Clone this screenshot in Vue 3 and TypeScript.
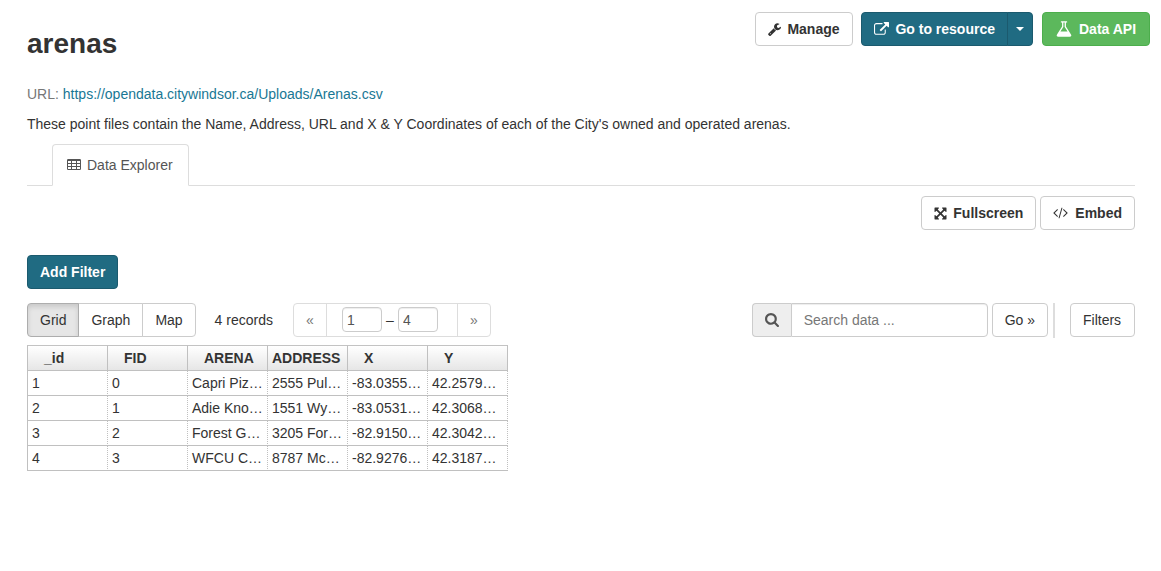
<script setup lang="ts">
import { ref } from 'vue'

interface Column {
  key: string
  wide?: boolean
}

const columns: Column[] = [
  { key: '_id' },
  { key: 'FID' },
  { key: 'ARENA' },
  { key: 'ADDRESS', wide: true },
  { key: 'X' },
  { key: 'Y' },
]

const rows: string[][] = [
  ['1', '0', 'Capri Piz…', '2555 Pul…', '-83.0355…', '42.2579…'],
  ['2', '1', 'Adie Kno…', '1551 Wy…', '-83.0531…', '42.3068…'],
  ['3', '2', 'Forest G…', '3205 For…', '-82.9150…', '42.3042…'],
  ['4', '3', 'WFCU C…', '8787 Mc…', '-82.9276…', '42.3187…'],
]

const views = ['Grid', 'Graph', 'Map']
const activeView = ref('Grid')
const from = ref('1')
const to = ref('4')
const query = ref('')
</script>

<template>
  <main class="page">
    <header class="header">
      <h1>arenas</h1>
      <div class="actions">
        <a class="btn strong manage" href="#">
          <svg class="icon w13" viewBox="64 96 1664 1664" aria-hidden="true"><path d="M448 1472q0-26-19-45t-45-19-45 19-19 45 19 45 45 19 45-19 19-45zm644-420l-682 682q-37 37-90 37-52 0-91-37l-106-108q-38-36-38-90 0-53 38-91l681-681q39 98 114.5 173.5t173.5 114.5zm634-435q0 39-23 106-47 134-164.5 217.5t-258.5 83.5q-185 0-316.5-131.5t-131.5-316.5 131.5-316.5 316.5-131.5q58 0 121.5 16.5t107.5 46.5q16 11 16 28t-16 28l-293 169v224l193 107q5-3 79-48.5t135.5-81 70.5-35.5q15 0 23.5 10t8.5 25z" /></svg>
          Manage
        </a>
        <div class="group">
          <a class="btn strong primary" href="#">
            <svg class="icon w15" viewBox="0 0 1792 1792" aria-hidden="true"><path d="M1408 928v320q0 119-84.5 203.5t-203.5 84.5h-832q-119 0-203.5-84.5t-84.5-203.5v-832q0-119 84.5-203.5t203.5-84.5h704q14 0 23 9t9 23v64q0 14-9 23t-23 9h-704q-66 0-113 47t-47 113v832q0 66 47 113t113 47h832q66 0 113-47t47-113v-320q0-14 9-23t23-9h64q14 0 23 9t9 23zm384-864v512q0 26-19 45t-45 19-45-19l-176-176-652 652q-10 10-23 10t-23-10l-114-114q-10-10-10-23t10-23l652-652-176-176q-19-19-19-45t19-45 45-19h512q26 0 45 19t19 45z" /></svg>
            Go to resource
          </a>
          <button class="btn primary toggle" type="button" aria-label="More resource options"><span class="caret"></span></button>
        </div>
        <button class="btn strong success" type="button">
          <svg class="icon w18" viewBox="0 0 1792 1792" aria-hidden="true"><path d="M1591 1448q56 89 21.5 152.5t-140.5 63.5h-1152q-106 0-140.5-63.5t21.5-152.5l503-793v-399h-64q-26 0-45-19t-19-45 19-45 45-19h512q26 0 45 19t19 45-19 45-45 19h-64v399zm-779-725l-272 429h712l-272-429-20-31v-436h-128v436z" /></svg>
          Data API
        </button>
      </div>
    </header>

    <p class="url">URL: <a href="https://opendata.citywindsor.ca/Uploads/Arenas.csv">https://opendata.citywindsor.ca/Uploads/Arenas.csv</a></p>
    <p>These point files contain the Name, Address, URL and X &amp; Y Coordinates of each of the City's owned and operated arenas.</p>

    <nav class="tabs">
      <a class="tab" href="#">
        <svg class="icon w14" viewBox="0 0 14 14" aria-hidden="true"><path fill-rule="evenodd" d="M1.2 1h11.6q1.2 0 1.2 1.2v8.6q0 1.2-1.2 1.2H1.2Q0 12 0 10.8V2.2Q0 1 1.2 1zM1 3v2h3V3zM5 3v2h4V3zM10 3v2h3V3zM1 6v2h3V6zM5 6v2h4V6zM10 6v2h3V6zM1 9v2h3V9zM5 9v2h4V9zM10 9v2h3V9z" /></svg>
        Data Explorer
      </a>
    </nav>

    <div class="view-actions">
      <a class="btn strong" href="#">
        <svg class="icon w13" viewBox="64 64 1664 1664" aria-hidden="true"><path d="M1411 541l-355 355 355 355 144-144q29-31 70-14 39 17 39 59v448q0 26-19 45t-45 19h-448q-42 0-59-40-17-39 14-69l144-144-355-355-355 355 144 144q31 30 14 69-17 40-59 40h-448q-26 0-45-19t-19-45v-448q0-42 40-59 39-17 69 14l144 144 355-355-355-355-144 144q-19 19-45 19-12 0-24-5-40-17-40-59v-448q0-26 19-45t45-19h448q42 0 59 40 17 39-14 69l-144 144 355 355 355-355-144-144q-31-30-14-69 17-40 59-40h448q26 0 45 19t19 45v448q0 42-39 59-13 5-25 5-26 0-45-19z" /></svg>
        Fullscreen
      </a>
      <button class="btn strong" type="button">
        <svg class="icon w16" viewBox="64 64 2048 1792" aria-hidden="true"><path d="M681 1399l-50 50q-10 10-23 10t-23-10l-466-466q-10-10-10-23t10-23l466-466q10-10 23-10t23 10l50 50q10 10 10 23t-10 23l-393 393 393 393q10 10 10 23t-10 23zm591-1067l-373 1291q-4 13-15.5 19.5t-23.5 2.5l-62-17q-13-4-19.5-15.5t-2.5-24.5l373-1291q4-13 15.5-19.5t23.5-2.5l62 17q13 4 19.5 15.5t2.5 24.5zm657 651l-466 466q-10 10-23 10t-23-10l-50-50q-10-10-10-23t10-23l393-393-393-393q-10-10-10-23t10-23l50-50q10-10 23-10t23 10l466 466q10 10 10 23t-10 23z" /></svg>
        Embed
      </button>
    </div>

    <button class="btn strong primary add-filter" type="button">Add Filter</button>

    <div class="toolbar">
      <div class="group">
        <button
          v-for="view in views"
          :key="view"
          class="btn"
          :class="{ active: view === activeView }"
          type="button"
          @click="activeView = view"
        >{{ view }}</button>
      </div>
      <span class="count">4 records</span>
      <div class="pager">
        <a class="step" href="#" aria-label="Previous page">«</a>
        <div class="range">
          <input v-model="from" type="text" aria-label="First record">
          <span>–</span>
          <input v-model="to" type="text" aria-label="Last record">
        </div>
        <a class="step" href="#" aria-label="Next page">»</a>
      </div>

      <form class="search" @submit.prevent>
        <div class="search-box">
          <label for="search-data" aria-label="Search data">
            <svg class="icon w14" viewBox="64 128 1664 1664" aria-hidden="true"><path d="M1216 832q0-185-131.5-316.5t-316.5-131.5-316.5 131.5-131.5 316.5 131.5 316.5 316.5 131.5 316.5-131.5 131.5-316.5zm512 832q0 52-38 90t-90 38q-54 0-90-38l-343-342q-179 124-399 124-143 0-273.5-55.5t-225-150-150-225-55.5-273.5 55.5-273.5 150-225 225-150 273.5-55.5 273.5 55.5 225 150 150 225 55.5 273.5q0 220-124 399l343 343q37 37 37 90z" /></svg>
          </label>
          <input id="search-data" v-model="query" type="text" placeholder="Search data ...">
        </div>
        <button class="btn" type="submit">Go »</button>
      </form>
      <div class="filters">
        <button class="btn" type="button">Filters</button>
      </div>
    </div>

    <table class="grid">
      <thead>
        <tr>
          <th v-for="column in columns" :key="column.key" scope="col" :class="{ wide: column.wide }">{{ column.key }}</th>
        </tr>
      </thead>
      <tbody>
        <tr v-for="row in rows" :key="row[0]">
          <td v-for="(cell, index) in row" :key="index">{{ cell }}</td>
        </tr>
      </tbody>
    </table>
  </main>
</template>

<style>
body {
  background: #fff;
}
</style>

<style scoped>
.page {
  padding: 12px 26px 24px 27px;
  color: #333;
  font: 14px/20px "Liberation Sans", Arial, sans-serif;
}

.page *,
.page *::before {
  box-sizing: border-box;
}

.header {
  display: flex;
  justify-content: space-between;
  align-items: flex-start;
  margin-right: -15px;
}

h1 {
  margin: 14px 0 22px;
  font-size: 28px;
  line-height: 36px;
}

.actions {
  display: flex;
  gap: 8px;
}

.actions .success {
  min-width: 108px;
  margin-left: 1px;
}

.manage {
  min-width: 98px;
}

p {
  margin: 0 0 10px;
}

.url {
  color: #777;
}

a {
  color: #187794;
  text-decoration: none;
}

input {
  color: #555;
  font: inherit;
  outline: none;
}

.btn {
  display: inline-flex;
  align-items: center;
  gap: 6px;
  height: 34px;
  margin: 0;
  padding: 0 12px;
  border: 1px solid #ccc;
  border-radius: 4px;
  background: #fff;
  color: #333;
  font: inherit;
  white-space: nowrap;
  cursor: pointer;
}

.btn.strong {
  font-weight: bold;
}

.btn.primary {
  border-color: #1b5a6e;
  background: #206b82;
  color: #fff;
}

.btn.success {
  border-color: #4cae4c;
  background: #5cb85c;
  color: #fff;
}

.icon {
  display: block;
  flex: none;
  fill: currentColor;
}

.w13 {
  width: 13px;
  height: 13px;
}

.w14 {
  width: 14px;
  height: 14px;
}

.w15 {
  width: 15px;
  height: 15px;
}

.w16 {
  width: 16px;
  height: 14px;
}

.w18 {
  width: 18px;
  height: 18px;
}

.group {
  display: flex;
}

.group .btn:not(:first-child) {
  margin-left: -1px;
  border-top-left-radius: 0;
  border-bottom-left-radius: 0;
}

.group .btn:not(:last-child) {
  border-top-right-radius: 0;
  border-bottom-right-radius: 0;
}

.btn.toggle {
  padding: 0 8px;
}

.caret {
  border-top: 4px solid;
  border-right: 4px solid transparent;
  border-left: 4px solid transparent;
}

.btn.active {
  z-index: 1;
  border-color: #adadad;
  background: #e6e6e6;
  box-shadow: inset 0 3px 5px rgba(0, 0, 0, 0.125);
}

.tabs {
  display: flex;
  padding-left: 25px;
  border-bottom: 1px solid #ddd;
}

.tab {
  display: flex;
  align-items: center;
  gap: 6px;
  margin-bottom: -1px;
  padding: 10px 15px 10px 14px;
  border: 1px solid #ddd;
  border-bottom-color: #fff;
  border-radius: 4px 4px 0 0;
  background: #fff;
  color: #555;
}

.view-actions {
  display: flex;
  justify-content: flex-end;
  gap: 4px;
  margin: 10px 0 25px;
}

.add-filter {
  display: flex;
  margin-bottom: 14px;
}

.toolbar {
  display: flex;
  align-items: flex-start;
  margin-bottom: 7px;
}

.count {
  margin: 7px 20px 0 19px;
}

.pager {
  display: flex;
  height: 34px;
  border: 1px solid #ddd;
  border-radius: 4px;
}

.step {
  width: 32px;
  padding: 6px 0;
  color: #777;
  text-align: center;
}

.range {
  display: flex;
  gap: 4px;
  padding: 3px 19px 0 15px;
  border: solid #ddd;
  border-width: 0 1px;
  line-height: 26px;
}

.range span {
  width: 8px;
}

.range input {
  width: 40px;
  height: 25px;
  padding: 0 4px;
  border: 1px solid #ccc;
  border-radius: 4px;
  box-shadow: inset 0 1px 1px rgba(0, 0, 0, 0.075);
}

.search {
  display: flex;
  gap: 4px;
  margin-left: auto;
}

.search-box {
  display: flex;
  width: 236px;
  height: 34px;
}

.search-box label {
  display: flex;
  align-items: center;
  padding: 0 12px;
  border: 1px solid #ccc;
  border-right: 0;
  border-radius: 4px 0 0 4px;
  background: #eee;
  color: #555;
}

.search-box input {
  flex: 1;
  min-width: 0;
  padding: 0 12px;
  border: 1px solid #ccc;
  border-radius: 0 4px 4px 0;
  box-shadow: inset 0 1px 1px rgba(0, 0, 0, 0.075);
}

.search-box input::placeholder {
  color: #777;
}

.filters {
  height: 35px;
  margin-left: 5px;
  padding-left: 15px;
  border-left: 2px solid #ddd;
}

.filters .btn {
  min-width: 65px;
}

.grid {
  width: 481px;
  border-spacing: 0;
  table-layout: fixed;
}

th,
td {
  width: 80px;
  height: 25px;
  padding: 0 4px;
  overflow: hidden;
  border-right: 1px dotted silver;
  border-bottom: 1px solid silver;
  text-align: left;
  text-overflow: ellipsis;
  white-space: nowrap;
}

th {
  height: 26px;
  padding-left: 16px;
  border-top: 1px solid #c3c3c3;
  border-right-style: solid;
  background: linear-gradient(#fff, #e6e6e6);
}

th.wide {
  padding-left: 4px;
}

th:first-child,
td:first-child {
  width: 81px;
  border-left: 1px solid silver;
}
</style>
